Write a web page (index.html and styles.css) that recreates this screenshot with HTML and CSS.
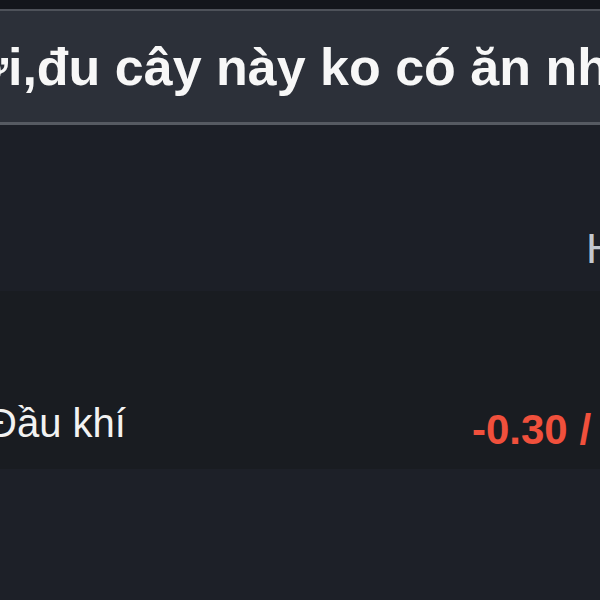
FILE: index.html
```html
<!DOCTYPE html>
<html lang="vi">
<head>
<meta charset="utf-8">
<link rel="stylesheet" href="styles.css">
</head>
<body>
<div class="page">
  <div class="topstrip"></div>
  <div class="header"><span class="title">Người,đu cây này ko có ăn nhiều không</span></div>
  <div class="section">
    <div class="col-head">Hôm nay</div>
  </div>
  <div class="row">
    <span class="label">Đầu khí</span>
    <span class="value">-0.30 / -1.25%</span>
  </div>
  <div class="fill"></div>
</div>
</body>
</html>
```
FILE: styles.css
```css
html, body {
  margin: 0;
  padding: 0;
  background: #1d2028;
  overflow: hidden;
}
.page {
  width: 600px;
  height: 600px;
  overflow: hidden;
  display: flex;
  flex-direction: column;
  font-family: "Liberation Sans", Arial, sans-serif;
}
.topstrip {
  height: 9px;
  background: #13161c;
  flex: none;
}
.header {
  flex: none;
  box-sizing: border-box;
  height: 116px;
  padding-top: 30px;
  background: #2c3039;
  border-top: 2px solid #4e525a;
  border-bottom: 3px solid #565a62;
  white-space: nowrap;
  overflow: hidden;
}
.title {
  display: block;
  color: #f7f7f7;
  font-weight: bold;
  font-size: 52px;
  line-height: 1;
  margin-left: -136px;
}
.section {
  flex: none;
  height: 166px;
  background: #1c1f27;
  white-space: nowrap;
  overflow: hidden;
}
.col-head {
  padding-left: 586px;
  padding-top: 102px;
  color: #c4c8cf;
  font-size: 43px;
  line-height: 1;
}
.row {
  flex: none;
  box-sizing: border-box;
  height: 178px;
  padding-top: 112px;
  background: #191c21;
  white-space: nowrap;
  overflow: hidden;
  display: flex;
  align-items: flex-start;
}
.label {
  color: #f2f2f2;
  font-size: 40px;
  line-height: 1;
  margin-left: -12px;
  width: 484px;
  flex: none;
}
.value {
  color: #f0503c;
  font-weight: bold;
  font-size: 42px;
  line-height: 1;
  margin-top: 6px;
  flex: none;
}
.fill {
  flex: 1;
  background: #1d2028;
}
```
